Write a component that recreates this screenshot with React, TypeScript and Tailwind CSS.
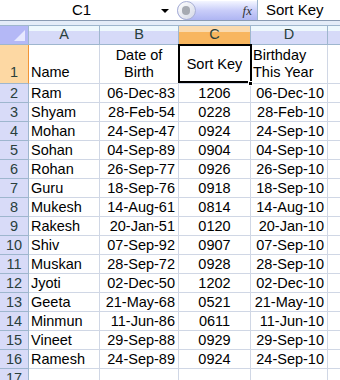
import React from "react";

type Row = [string, string, string, string];

const rows: Row[] = [
  ["Ram", "06-Dec-83", "1206", "06-Dec-10"],
  ["Shyam", "28-Feb-54", "0228", "28-Feb-10"],
  ["Mohan", "24-Sep-47", "0924", "24-Sep-10"],
  ["Sohan", "04-Sep-89", "0904", "04-Sep-10"],
  ["Rohan", "26-Sep-77", "0926", "26-Sep-10"],
  ["Guru", "18-Sep-76", "0918", "18-Sep-10"],
  ["Mukesh", "14-Aug-61", "0814", "14-Aug-10"],
  ["Rakesh", "20-Jan-51", "0120", "20-Jan-10"],
  ["Shiv", "07-Sep-92", "0907", "07-Sep-10"],
  ["Muskan", "28-Sep-72", "0928", "28-Sep-10"],
  ["Jyoti", "02-Dec-50", "1202", "02-Dec-10"],
  ["Geeta", "21-May-68", "0521", "21-May-10"],
  ["Minmun", "11-Jun-86", "0611", "11-Jun-10"],
  ["Vineet", "29-Sep-88", "0929", "29-Sep-10"],
  ["Ramesh", "24-Sep-89", "0924", "24-Sep-10"],
];

const FormulaBar = () => (
  <div className="flex h-[21px] border-b border-[#8a9bb3] bg-white">
    <div className="relative flex w-[175px] items-center justify-center pr-[12px] text-[15px]">
      C1
      <span className="absolute right-[6px] top-[9px] h-0 w-0 border-x-[4px] border-t-[4px] border-x-transparent border-t-black" />
    </div>
    <div className="relative mt-px ml-[2px] flex h-[19px] w-[80px] items-center justify-end rounded-l-full bg-gradient-to-b from-[#f4f6ff] via-[#c9cdf9] to-[#aeb5f2] pr-[5px]">
      <span className="absolute left-0 top-0 h-[19px] w-[19px] rounded-full border border-[#a9b0d4] bg-gradient-to-br from-white to-[#d4d8e6]">
        <span className="absolute left-[4px] top-[4px] h-[9px] w-[8px] rounded-full bg-[#a6aab2]" />
      </span>
      <span className="text-[13px] italic text-[#333]" style={{ fontFamily: '"Liberation Serif", serif' }}>
        fx
      </span>
    </div>
    <div className="flex flex-1 items-center border-l border-[#9eb6ce] pl-[8px] text-[15px]">
      Sort Key
    </div>
  </div>
);

const colHead = "flex items-center justify-center border-r border-[#9eb6ce] bg-gradient-to-b from-[#eef8fd] from-30% to-[#d6daf8] to-30%";

const Header = () => (
  <div className="flex h-[19px] border-b border-[#9eb6ce] text-[14.5px] text-[#2a3f3c]">
    <div className="relative w-[29px] border-r border-[#9eb6ce] bg-[#b4b8f6]">
      <span className="absolute right-[3px] bottom-[3px] h-0 w-0" style={{ borderBottom: "11px solid #e6e8ff", borderLeft: "11px solid transparent" }} />
    </div>
    <div className={`w-[71px] ${colHead}`}>A</div>
    <div className={`w-[79px] ${colHead}`}>B</div>
    <div className="flex w-[72px] items-center justify-center border-r border-[#9eb6ce] bg-gradient-to-b from-[#fadaae] from-35% to-[#f8b65f] to-35%">C</div>
    <div className={`w-[77px] ${colHead}`}>D</div>
    <div className="flex-1 bg-gradient-to-b from-[#eef8fd] from-30% to-[#d6daf8] to-30%" />
  </div>
);

const cell = "border-r border-b border-[#d0d7e5]";
const rowHead = "flex w-[29px] items-center justify-center border-r border-b border-[#9eb6ce] bg-[#d8dbf8] text-[#2a3f3c]";

export default function App() {
  return (
    <div className="h-[380px] w-[340px] overflow-hidden bg-white text-black" style={{ fontFamily: '"Liberation Sans", Arial, sans-serif' }}>
      <FormulaBar />
      <div className="h-[5px] border-b border-[#9eb6ce] bg-[#e4ecf8]" />
      <Header />
      <div className="text-[14.5px] leading-[17px]">
        <div className="flex h-[39px]">
          <div className="flex w-[29px] items-end justify-center border-r border-b border-r-[#f29536] border-b-[#9eb6ce] bg-[#fdd8a3] pb-[2px] text-[#2a3f3c]">1</div>
          <div className={`flex w-[71px] items-end pb-[2px] pl-[2px] ${cell}`}>Name</div>
          <div className={`flex w-[79px] flex-col items-center justify-end pb-[2px] ${cell}`}>
            <span>Date of</span>
            <span>Birth</span>
          </div>
          <div className={`relative flex w-[72px] items-center justify-center ${cell}`}>
            Sort Key
            <span className="absolute -left-[1px] -top-px h-[39px] w-[74px] border-2 border-black" />
            <span className="absolute -right-[3px] -bottom-[3px] h-[5px] w-[5px] border border-white bg-black" />
          </div>
          <div className={`flex w-[77px] flex-col justify-end pb-[2px] pl-[2px] ${cell}`}>
            <span>Birthday</span>
            <span>This Year</span>
          </div>
          <div className="flex-1 border-b border-[#d0d7e5]" />
        </div>
        {rows.map((r, i) => (
          <div key={i} className="flex h-[19px]">
            <div className={rowHead}>{i + 2}</div>
            <div className={`flex w-[71px] items-center pl-[2px] ${cell}`}>{r[0]}</div>
            <div className={`flex w-[79px] items-center justify-end pr-[3px] ${cell}`}>{r[1]}</div>
            <div className={`flex w-[72px] items-center justify-center ${cell}`}>{r[2]}</div>
            <div className={`flex w-[77px] items-center justify-end pr-[3px] ${cell}`}>{r[3]}</div>
            <div className="flex-1 border-b border-[#d0d7e5]" />
          </div>
        ))}
        <div className="flex h-[19px]">
          <div className={rowHead}>17</div>
          <div className={`w-[71px] ${cell}`} />
          <div className={`w-[79px] ${cell}`} />
          <div className={`w-[72px] ${cell}`} />
          <div className={`w-[77px] ${cell}`} />
          <div className="flex-1 border-b border-[#d0d7e5]" />
        </div>
      </div>
    </div>
  );
}
